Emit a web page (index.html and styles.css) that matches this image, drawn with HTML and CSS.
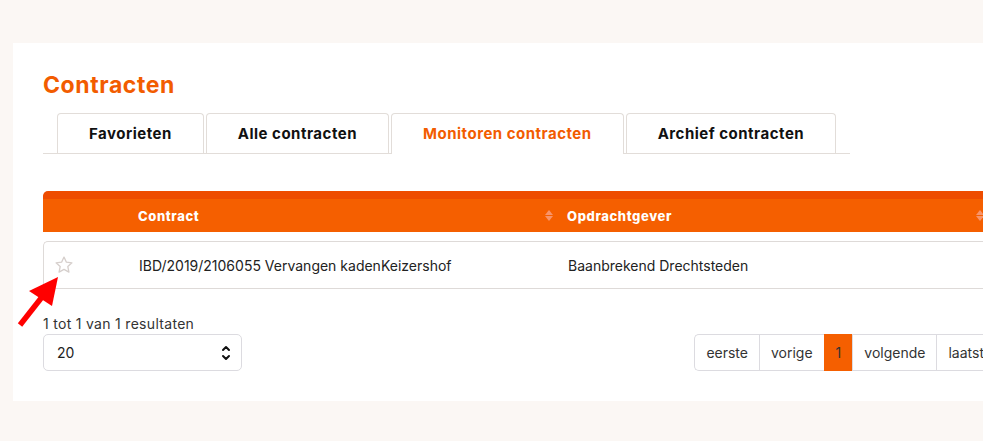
FILE: index.html
```html
<!DOCTYPE html>
<html lang="nl">
<head>
    <meta charset="UTF-8">
    <title>Contracten</title>
    <link rel="stylesheet" href="styles.css">
</head>
<body>
    <div class="card">
        <h1 class="title">Contracten</h1>

        <!-- Tabs -->
        <div class="tabs">
            <div class="tab">Favorieten</div>
            <div class="tab">Alle contracten</div>
            <div class="tab active">Monitoren contracten</div>
            <div class="tab">Archief contracten</div>
        </div>

        <!-- Table -->
        <div class="table">
            <div class="thead">
                <div class="th"></div>
                <div class="th sortable">Contract <span class="sort"></span></div>
                <div class="th sortable">Opdrachtgever <span class="sort"></span></div>
            </div>
            <div class="trow">
                <div class="td star-cell">
                    <svg width="20" height="20" viewBox="0 0 24 24" fill="none" stroke="#d6cfcc" stroke-width="1.6" stroke-linejoin="round">
                        <polygon points="12,2.5 14.9,8.6 21.5,9.4 16.6,13.9 17.9,20.5 12,17.2 6.1,20.5 7.4,13.9 2.5,9.4 9.1,8.6"/>
                    </svg>
                </div>
                <div class="td">IBD/2019/2106055 Vervangen kadenKeizershof</div>
                <div class="td">Baanbrekend Drechtsteden</div>
            </div>
        </div>

        <div class="results">1 tot 1 van 1 resultaten</div>

        <div class="footer">
            <div class="select">
                <span>20</span>
                <svg width="10" height="18" viewBox="0 0 10 18" fill="none" stroke="#111" stroke-width="2" stroke-linecap="round" stroke-linejoin="round">
                    <polyline points="2,6 5,3 8,6"/>
                    <polyline points="2,12 5,15 8,12"/>
                </svg>
            </div>
            <div class="pager">
                <div class="page">eerste</div>
                <div class="page">vorige</div>
                <div class="page current">1</div>
                <div class="page">volgende</div>
                <div class="page">laatste</div>
            </div>
        </div>

        <!-- annotation arrow -->
        <svg class="arrow" width="60" height="60" viewBox="0 0 60 60">
            <line x1="7" y1="53" x2="29" y2="25" stroke="#ff0000" stroke-width="5.5"/>
            <polygon points="45,5 16,19 39,34" fill="#ff0000"/>
        </svg>
    </div>
</body>
</html>
```

FILE: styles.css
```css
body {
    margin: 0;
    background-color: #fbf7f4;
    font-family: Inter, "Open Sans", sans-serif;
    color: #222;
    overflow: hidden;
}
.card {
    position: relative;
    background: #ffffff;
    margin: 43px 0 0 13px;
    width: 1000px;
    height: 358px;
    padding: 0 30px;
    box-sizing: border-box;
}
.title {
    margin: 0;
    padding-top: 28px;
    font-size: 23px;
    line-height: 28px;
    font-weight: 700;
    letter-spacing: 0.6px;
    color: #f25c00;
}
.tabs {
    display: flex;
    gap: 2px;
    margin-top: 14px;
    width: fit-content;
    padding: 0 14px;
    border-bottom: 1px solid #e2ddd9;
}
.tab {
    height: 39px;
    line-height: 39px;
    padding: 0 31px;
    border: 1px solid #e2ddd9;
    border-bottom: none;
    border-radius: 4px 4px 0 0;
    font-size: 15px;
    font-weight: 700;
    letter-spacing: 0.5px;
    color: #111;
    margin-bottom: -1px;
    background: #fff;
}
.tab.active {
    color: #f25c00;
    height: 40px;
}
.table {
    margin-top: 37px;
    width: 945px;
}
.thead, .trow {
    display: grid;
    grid-template-columns: 85px 429px 1fr;
    align-items: center;
}
.thead {
    background: #f55f00;
    border-top: 8px solid #ee4c00;
    border-radius: 5px 0 0 0;
    box-sizing: border-box;
    height: 41px;
    color: #fff;
    font-size: 13px;
    font-weight: 800;
    letter-spacing: 0.6px;
}
.th {
    padding-left: 10px;
    display: flex;
    align-items: center;
}
.sort {
    margin-left: auto;
    margin-right: 4px;
    width: 0;
    height: 0;
    position: relative;
    border-left: 4px solid transparent;
    border-right: 4px solid transparent;
    border-bottom: 5px solid #f8946a;
    top: -3px;
}
.sort::after {
    content: "";
    position: absolute;
    left: -4px;
    top: 6px;
    border-left: 4px solid transparent;
    border-right: 4px solid transparent;
    border-top: 5px solid #f8946a;
}
.trow {
    margin-top: 9px;
    height: 48px;
    box-sizing: border-box;
    border: 1px solid #dedad8;
    border-right: none;
    border-radius: 5px 0 0 5px;
    font-size: 14px;
}
.td {
    padding-left: 10px;
}
.star-cell {
    padding-left: 10px;
    display: flex;
}
.results {
    margin-top: 26px;
    font-size: 14px;
    letter-spacing: 0.3px;
    color: #333;
}
.footer {
    display: flex;
    justify-content: space-between;
    margin-top: 2px;
}
.select {
    width: 199px;
    height: 37px;
    box-sizing: border-box;
    border: 1px solid #dcdbe0;
    border-radius: 5px;
    display: flex;
    align-items: center;
    justify-content: space-between;
    padding: 0 10px 0 13px;
    font-size: 14px;
}
.pager {
    display: flex;
    height: 37px;
    border: 1px solid #dcdbe0;
    border-right: none;
    border-radius: 5px 0 0 5px;
    box-sizing: border-box;
    margin-right: -20px;
    font-size: 14px;
    color: #333;
}
.page {
    display: flex;
    align-items: center;
    padding: 0 11px;
    border-left: 1px solid #dcdbe0;
}
.page:first-child {
    border-left: none;
}
.page.current {
    background: #f55f00;
    border-left-color: #f55f00;
    padding: 0 11px;
    margin: -1px 0;
}
.arrow {
    position: absolute;
    left: 0;
    top: 229px;
}
```
